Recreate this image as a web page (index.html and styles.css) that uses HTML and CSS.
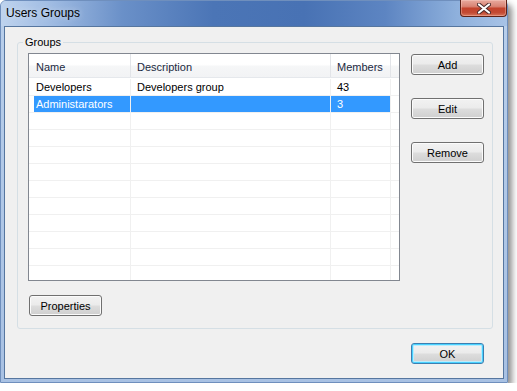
FILE: index.html
```html
<!DOCTYPE html>
<html lang="en">
<head>
  <meta charset="UTF-8">
  <title>Users Groups</title>
  <link rel="stylesheet" href="styles.css">
</head>
<body>

<div class="window">
  <div class="titlebar">
    <span class="title">Users Groups</span>
    <button class="close" title="Close">
      <svg width="14" height="11" viewBox="0 0 14 11">
        <path d="M2 1.5 L12 9.5 M12 1.5 L2 9.5" stroke="#4a2a2a" stroke-width="4" stroke-linecap="round" fill="none"/>
        <path d="M2 1.5 L12 9.5 M12 1.5 L2 9.5" stroke="#ffffff" stroke-width="2.2" stroke-linecap="round" fill="none"/>
      </svg>
    </button>
  </div>

  <div class="client">
    <fieldset class="groupbox">
      <legend>Groups</legend>
      <div class="group-body">
        <div class="listview">
          <div class="lv-header">
            <div class="col col-name">Name</div>
            <div class="col col-desc">Description</div>
            <div class="col col-members">Members</div>
            <div class="col col-fill"></div>
          </div>
          <div class="lv-body" id="lvBody"></div>
        </div>
        <div class="side-buttons">
          <button class="btn">Add</button>
          <button class="btn">Edit</button>
          <button class="btn">Remove</button>
        </div>
      </div>
      <button class="btn btn-props">Properties</button>
    </fieldset>

    <div class="footer">
      <button class="btn btn-default">OK</button>
    </div>
  </div>
</div>

<script>
  const groups = [
    { name: "Developers", description: "Developers group", members: 43 },
    { name: "Administarators", description: "", members: 3, selected: true }
  ];

  function renderGroups() {
    const body = document.getElementById("lvBody");
    let html = "";
    for (let i = 0; i < 12; i++) {
      const g = groups[i];
      const cls = g && g.selected ? "lv-row selected" : "lv-row";
      html += `<div class="${cls}">
        <div class="cell col-name"><span class="name-text">${g ? g.name : ""}</span></div>
        <div class="cell col-desc">${g ? g.description : ""}</div>
        <div class="cell col-members">${g ? g.members : ""}</div>
        <div class="cell col-fill"></div>
      </div>`;
    }
    body.innerHTML = html;
  }

  renderGroups();
</script>

</body>
</html>
```

FILE: styles.css
```css
body {
  margin: 0;
  background: #fff;
  font-family: 'Liberation Sans', Arial, sans-serif;
  font-size: 11px;
  color: #000;
}
.window {
  box-sizing: border-box;
  width: 508px;
  height: 383px;
  border: 1px solid #6f8fbd;
  border-radius: 6px 6px 0 0;
  background: linear-gradient(to bottom, #b9cfeb, #a8c1e3);
  padding: 0 3px 3px 3px;
  display: flex;
  flex-direction: column;
  box-shadow: 4px 4px 6px rgba(0, 0, 0, 0.45);
}
.titlebar {
  height: 25px;
  margin: 0 -3px;
  padding-left: 5px;
  display: flex;
  align-items: flex-start;
  border-radius: 5px 5px 0 0;
  background: linear-gradient(to right, #bed3ee 0%, #9fbbe2 10%, #6a90c8 24%, #4b75b6 42%, #4872b4 60%, #5d85c2 76%, #8eb0dc 90%, #a8c3e6 100%);
}
.title {
  font-size: 12px;
  line-height: 12px;
  margin-top: 6px;
  color: #000;
  text-shadow: 0 0 6px rgba(255, 255, 255, 0.6);
}
.close {
  margin-left: auto;
  margin-top: -1px;
  width: 47px;
  height: 17px;
  padding: 0;
  border: 1px solid #5d2116;
  border-top: none;
  border-radius: 0 0 4px 4px;
  background: linear-gradient(to bottom, #e9aa9e 0%, #d98474 40%, #c4432c 52%, #c24a33 78%, #d8745a 100%);
  display: flex;
  align-items: center;
  justify-content: center;
  box-shadow: inset 0 0 0 1px rgba(255, 220, 210, 0.35);
}
.close svg {
  display: block;
}
.client {
  flex: 1;
  background: #f0f0f0;
  border: 1px solid #56769f;
  padding: 8px 10px 14px 12px;
  display: flex;
  flex-direction: column;
}
.groupbox {
  margin: 0;
  padding: 4px 7px 12px 10px;
  border: 1px solid #d5dfe5;
  border-radius: 3px;
  min-width: 0;
}
.groupbox legend {
  padding: 0 2px;
  margin-left: -5px;
  line-height: 14px;
  color: #000;
}
.group-body {
  display: flex;
  gap: 11px;
}
.listview {
  box-sizing: border-box;
  width: 372px;
  height: 228px;
  border: 1px solid #828790;
  background: #fff;
  overflow: hidden;
}
.lv-header {
  display: flex;
  height: 24px;
  box-sizing: border-box;
  border-bottom: 1px solid #e5e8ec;
  background: linear-gradient(to bottom, #ffffff 0%, #ffffff 45%, #f5f6f7 55%, #f2f3f5 100%);
}
.lv-header .col {
  box-sizing: border-box;
  border-right: 1px solid #e2e4e8;
  padding: 3px 0 0 6px;
  line-height: 20px;
  color: #1b2a42;
}
.lv-header .col-name {
  padding-left: 7px;
}
.lv-header .col-fill {
  border-right: none;
}
.col-name { width: 102px; }
.col-desc { width: 200px; }
.col-members { width: 60px; }
.col-fill { width: 8px; }
.lv-body {
  padding-top: 1px;
}
.lv-row {
  display: flex;
  height: 17px;
  box-sizing: border-box;
  border-bottom: 1px solid #f0f0f0;
}
.cell {
  box-sizing: border-box;
  border-right: 1px solid #f0f0f0;
  padding-left: 6px;
  line-height: 16px;
  white-space: nowrap;
  overflow: hidden;
}
.cell.col-name {
  padding-left: 5px;
}
.cell.col-fill {
  border-right: none;
}
.name-text {
  display: block;
  padding-left: 2px;
  height: 16px;
}
.lv-row.selected .name-text,
.lv-row.selected .col-desc,
.lv-row.selected .col-members {
  background: #3399ff;
  color: #fff;
}
.side-buttons {
  display: flex;
  flex-direction: column;
  gap: 23px;
  margin-top: 1px;
}
.btn {
  box-sizing: border-box;
  width: 73px;
  height: 21px;
  padding: 0;
  font-family: 'Liberation Sans', Arial, sans-serif;
  font-size: 11px;
  color: #000;
  border: 1px solid #707070;
  border-radius: 3px;
  background: linear-gradient(to bottom, #f2f2f2 0%, #ebebeb 48%, #dddddd 52%, #cfcfcf 100%);
  box-shadow: inset 0 0 0 1px #fbfbfb;
  cursor: pointer;
}
.btn-props {
  display: block;
  margin: 14px 0 0 1px;
}
.footer {
  display: flex;
  justify-content: flex-end;
  padding-right: 9px;
  margin-top: 14px;
}
.btn-default {
  border-color: #3c7fb1;
  box-shadow: inset 0 0 0 1px #48d1ff, inset 0 0 0 2px #b9ecfd;
}
```
